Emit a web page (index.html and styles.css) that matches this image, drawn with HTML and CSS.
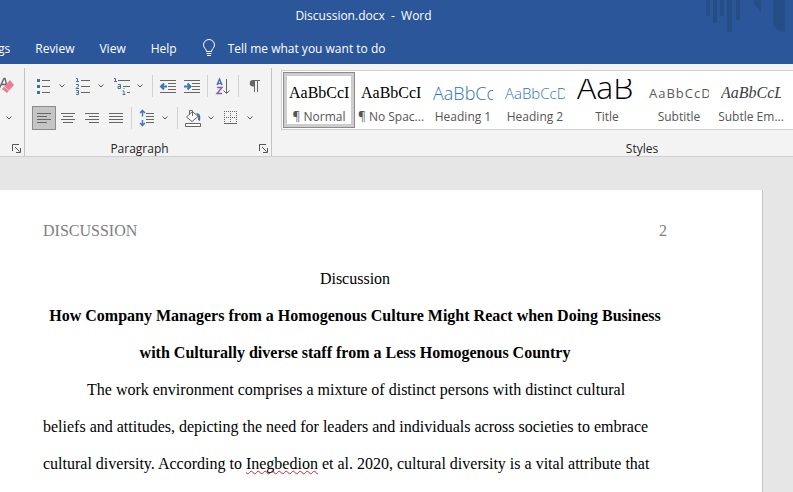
FILE: index.html
```html
<!DOCTYPE html>
<html lang="en">
<head>
<meta charset="utf-8">
<title>Discussion.docx - Word</title>
<link rel="stylesheet" href="styles.css">
</head>
<body>
<header class="top">
  <svg class="art" width="92" height="42" viewBox="0 0 92 42" aria-hidden="true">
    <path d="M5 0h4v16H5zM12 0h4v23h-4zM19 0h4v16h-4zM26 0h5v32h-5zM35 0h4v20h-4zM53 0h7v13q-3-6-7-9zM72 0h12v32q-9-1-12-7z"/>
  </svg>
  <h1 class="title">Discussion.docx&nbsp; -&nbsp; Word</h1>
  <nav class="tabs">
    <a href="#mailings">gs</a>
    <a href="#review">Review</a>
    <a href="#view">View</a>
    <a href="#help">Help</a>
    <button class="tell" type="button">
      <svg width="14" height="18" viewBox="0 0 14 18"><path d="M4.500 12.500C4.500 10 1.500 9 1.500 6a5.500 5.500 0 0 1 11 0c0 3-3 4-3 6.500zM4.500 14.500h5M5 16.500h4"/></svg>
      <span>Tell me what you want to do</span>
    </button>
  </nav>
</header>

<section class="ribbon">
  <div class="group font-group">
    <div class="row">
      <button class="tool" type="button" aria-label="Clear formatting"><svg width="24" height="24" viewBox="0 0 24 24"><path class="ink thick" d="M8.500 14 13 4.500h1l1.500 6M10.500 10.500h5"/><path class="pink" d="m19 6 4 5-7 8-5-4z"/><path class="pale" d="m13 12.500 5 4"/></svg></button>
    </div>
    <div class="row">
      <button class="drop" type="button" aria-label="Font color options"><svg width="8" height="6" viewBox="0 0 8 6"><path d="m1.500 1.500 2.500 2.500 2.500-2.500"/></svg></button>
    </div>
    <div class="foot"><button class="launch" type="button" aria-label="Font settings"><svg width="9" height="9" viewBox="0 0 9 9"><path d="M.5 7V.5H7M3 3l4.500 4.500M8.500 4v4.500H4"/></svg></button></div>
  </div>

  <div class="group para-group">
    <div class="row">
      <button class="tool" type="button" aria-label="Bullets"><svg width="24" height="24" viewBox="0 0 24 24"><path class="ink" d="M10 6.500h8M10 12.500h8M10 18.500h8"/><path class="bluefill" d="M5 5h3v3H5zM5 11h3v3H5zM5 17h3v3H5z"/></svg></button>
      <button class="drop" type="button" aria-label="Bullet options"><svg width="8" height="6" viewBox="0 0 8 6"><path d="m1.500 1.500 2.500 2.500 2.500-2.500"/></svg></button>
      <button class="tool" type="button" aria-label="Numbering"><svg width="24" height="24" viewBox="0 0 24 24"><path class="ink" d="M10 6.500h9M10 12.500h9M10 18.500h9"/><path class="blue" d="M5 4.500h1.500v3M5 7.500h3M5 10.500h2.500v1.500L5 14.500h3M5 16.500h2.500v4H5M5.500 18.500h2"/></svg></button>
      <button class="drop" type="button" aria-label="Numbering options"><svg width="8" height="6" viewBox="0 0 8 6"><path d="m1.500 1.500 2.500 2.500 2.500-2.500"/></svg></button>
      <button class="tool" type="button" aria-label="Multilevel list"><svg width="24" height="24" viewBox="0 0 24 24"><path class="ink" d="M8 6.500h12M13 12.500h7M17 18.500h3"/><path class="blue" d="M4 4.500h1.500v3M4 7.500h3M8 10.500h2.500v4H8v-2h2.500M12.500 17h1.500v4M12.500 20.500h3M13.500 14.500h1"/></svg></button>
      <button class="drop" type="button" aria-label="Multilevel options"><svg width="8" height="6" viewBox="0 0 8 6"><path d="m1.500 1.500 2.500 2.500 2.500-2.500"/></svg></button>
      <span class="sep"></span>
      <button class="tool" type="button" aria-label="Decrease indent"><svg width="24" height="24" viewBox="0 0 24 24"><path class="ink" d="M4 6.500h16M12 9.500h8M12 12.500h8M12 15.500h8M4 18.500h16"/><path class="bold" d="M11 12.500H5M8 9.500l-3 3 3 3"/></svg></button>
      <button class="tool" type="button" aria-label="Increase indent"><svg width="24" height="24" viewBox="0 0 24 24"><path class="ink" d="M4 6.500h16M12 9.500h8M12 12.500h8M12 15.500h8M4 18.500h16"/><path class="bold" d="M4 12.500h6M7.500 9.500l3 3-3 3"/></svg></button>
      <span class="sep"></span>
      <button class="tool" type="button" aria-label="Sort"><svg width="24" height="24" viewBox="0 0 24 24"><path class="blue thick" d="M6 11 8.500 5 11 11M7 9.500h3"/><path class="violet" d="M6 13.500h5L6 19.500h5"/><path class="ink" d="M15.500 5v14.500M12.500 16.500l3 3 3-3"/></svg></button>
      <span class="sep"></span>
      <button class="tool" type="button" aria-label="Show paragraph marks"><svg width="24" height="24" viewBox="0 0 24 24"><path class="ink" d="M11 6.500h7M12.500 6.500V18M15.500 6.500V18"/><path class="inkfill" d="M13 6h-2a3 3 0 0 0 0 6.500h2z"/></svg></button>
    </div>
    <div class="row">
      <button class="tool on" type="button" aria-label="Align left"><svg width="24" height="24" viewBox="0 0 24 24"><path class="ink" d="M5 7.500h14M5 10.500h10M5 13.500h14M5 16.500h10"/></svg></button>
      <button class="tool" type="button" aria-label="Center"><svg width="24" height="24" viewBox="0 0 24 24"><path class="ink" d="M5 7.500h14M7 10.500h10M5 13.500h14M7 16.500h10"/></svg></button>
      <button class="tool" type="button" aria-label="Align right"><svg width="24" height="24" viewBox="0 0 24 24"><path class="ink" d="M5 7.500h14M9 10.500h10M5 13.500h14M9 16.500h10"/></svg></button>
      <button class="tool" type="button" aria-label="Justify"><svg width="24" height="24" viewBox="0 0 24 24"><path class="ink" d="M5 7.500h14M5 10.500h14M5 13.500h14M5 16.500h14"/></svg></button>
      <span class="sep"></span>
      <button class="tool" type="button" aria-label="Line spacing"><svg width="24" height="24" viewBox="0 0 24 24"><path class="ink" d="M11 7.500h8M11 10.500h8M11 13.500h8M11 16.500h8"/><path class="blue thick" d="M7.500 5v5.500M5 7l2.500-2.500L10 7M7.500 14v5.500M5 17l2.500 2.500L10 17"/></svg></button>
      <button class="drop" type="button" aria-label="Line spacing options"><svg width="8" height="6" viewBox="0 0 8 6"><path d="m1.500 1.500 2.500 2.500 2.500-2.500"/></svg></button>
      <span class="sep"></span>
      <button class="tool" type="button" aria-label="Shading"><svg width="24" height="24" viewBox="0 0 24 24"><path class="ink white" d="m11.500 5.500 5.500 5-6 5-5.500-4.500z"/><path class="ink" d="M8.500 9V4.500h3V10"/><path class="bluefill" d="M15 7c4 0 5 3 4 8l-2-1c0-2 1-3-2-7z"/><path class="ink white" d="M4.500 17.500h15v3h-15z"/></svg></button>
      <button class="drop" type="button" aria-label="Shading options"><svg width="8" height="6" viewBox="0 0 8 6"><path d="m1.500 1.500 2.500 2.500 2.500-2.500"/></svg></button>
      <button class="tool" type="button" aria-label="Borders"><svg width="24" height="24" viewBox="0 0 24 24"><path class="ink dots" d="M4 5.500h13M4 11.500h13M4.500 5v12M10.500 5v12M16.500 5v12"/><path class="ink" d="M4 17.500h13"/></svg></button>
      <button class="drop" type="button" aria-label="Border options"><svg width="8" height="6" viewBox="0 0 8 6"><path d="m1.500 1.500 2.500 2.500 2.500-2.500"/></svg></button>
    </div>
    <div class="foot"><span class="name">Paragraph</span><button class="launch" type="button" aria-label="Paragraph settings"><svg width="9" height="9" viewBox="0 0 9 9"><path d="M.5 7V.5H7M3 3l4.500 4.500M8.500 4v4.500H4"/></svg></button></div>
  </div>

  <div class="group style-group">
    <div class="gallery">
      <button class="style current" type="button"><span class="demo serif">AaBbCcI</span><span class="label">¶ Normal</span></button>
      <button class="style" type="button"><span class="demo serif">AaBbCcI</span><span class="label">¶ No Spac...</span></button>
      <button class="style" type="button"><span class="demo head1">AaBbCc</span><span class="label">Heading 1</span></button>
      <button class="style" type="button"><span class="demo head2">AaBbCcD</span><span class="label">Heading 2</span></button>
      <button class="style" type="button"><span class="demo big">AaB</span><span class="label">Title</span></button>
      <button class="style" type="button"><span class="demo sub">AaBbCcD</span><span class="label">Subtitle</span></button>
      <button class="style" type="button"><span class="demo serif subtle">AaBbCcL</span><span class="label">Subtle Em...</span></button>
    </div>
    <div class="foot"><span class="name">Styles</span></div>
  </div>
</section>

<main class="desk">
  <article class="page">
    <div class="running"><span>DISCUSSION</span><span>2</span></div>
    <p class="center">Discussion</p>
    <h2>How Company Managers from a Homogenous Culture Might React when Doing Business<br>with Culturally diverse staff from a Less Homogenous Country</h2>
    <p class="body">The work environment comprises a mixture of distinct persons with distinct cultural<br>beliefs and attitudes, depicting the need for leaders and individuals across societies to embrace<br>cultural diversity. According to <span class="typo">Inegbedion</span> et al. 2020, cultural diversity is a vital attribute that</p>
  </article>
</main>
</body>
</html>
```
FILE: styles.css
```css
* { box-sizing: border-box; }
html, body { height: 100%; }
body {
  margin: 0;
  display: flex;
  flex-direction: column;
  overflow: hidden;
  background: #e6e6e6;
  font-family: "Open Sans", "Noto Sans", sans-serif;
  font-size: 12px;
}
button {
  margin: 0;
  padding: 0;
  border: 0;
  background: none;
  font: inherit;
  color: inherit;
}
svg { display: block; fill: none; }

.top {
  position: relative;
  flex: none;
  background: #2b579a;
  color: #fff;
}
.art { position: absolute; top: 0; right: 0; fill: #254d86; }
.title {
  margin: 0;
  padding-right: 66px;
  font-size: 12px;
  font-weight: 400;
  line-height: 32px;
  text-align: center;
}
.tabs { display: flex; align-items: center; gap: 25px; height: 32px; margin-left: -2px; }
.tabs a { color: #fff; text-decoration: none; }
.tell { display: flex; align-items: center; gap: 12px; }
.tell svg { stroke: #fff; }

.ribbon {
  flex: none;
  display: flex;
  background: #f3f3f3;
  border-bottom: 1px solid #cfcfcf;
  padding-top: 4px;
}
.group { display: flex; flex-direction: column; }
.font-group { width: 25px; border-right: 1px solid #c4c4c4; }
.font-group .row { justify-content: flex-end; padding-right: 9px; }
.para-group { width: 247px; padding-left: 7px; border-right: 1px solid #c4c4c4; }
.style-group { flex: 1; min-width: 0; padding-left: 9px; }
.row { display: flex; align-items: center; height: 24px; margin-top: 6px; }
.row + .row { margin-top: 8px; }
.tool { flex: none; width: 24px; height: 24px; }
.on { background: #c5c5c5; outline: 1px solid #8c8c8c; outline-offset: -1px; }
.drop { display: flex; justify-content: center; width: 12px; margin-right: 3px; }
.drop svg { stroke: #555; }
.font-group .drop { margin: 0; }
.sep { width: 1px; height: 22px; margin: 0 3px; background: #d2d2d2; }
.foot { display: flex; align-items: center; height: 16px; margin-top: 10px; color: #262626; }
.para-group .foot { margin-right: 3px; }
.font-group .foot { justify-content: flex-end; padding-right: 3px; }
.name { flex: 1; text-align: center; }
.para-group .name { padding-right: 12px; }
.launch svg { stroke: #555; }

.ink { stroke: #666; }
.white { fill: #fff; }
.dots { stroke-dasharray: 1 1; }
.inkfill { fill: #666; }
.blue { stroke: #4472a8; }
.bluefill { fill: #41719c; }
.thick { stroke-width: 1.4; }
.bold { stroke: #3c76b4; stroke-width: 2; }
.violet { stroke: #8b5aa8; stroke-width: 1.4; }
.pink { fill: #ea7e92; }
.pale { stroke: #f8ccd4; stroke-width: 1; }

.gallery {
  display: flex;
  height: 60px;
  margin-top: 2px;
  padding: 1px;
  background: #fff;
  border: 1px solid #d0d0d0;
  border-right: 0;
  overflow: hidden;
}
.style {
  flex: none;
  display: flex;
  flex-direction: column;
  align-items: center;
  width: 72px;
  padding-top: 7px;
}
.current { outline: 1px solid #8c8c8c; outline-offset: -1px; box-shadow: inset 0 0 0 4px #cdcdcd; }
.demo {
  width: 60px;
  height: 28px;
  line-height: 28px;
  overflow: hidden;
  white-space: nowrap;
  text-align: left;
  color: #000;
}
.label { line-height: 20px; white-space: nowrap; color: #555; }
.serif { font-family: "Liberation Serif", serif; font-size: 16px; }
.head1 { font-size: 18px; font-weight: 300; color: #2e74b5; }
.head2 { font-size: 15px; font-weight: 300; color: #2e74b5; }
.big { font-size: 32px; font-weight: 300; line-height: 16px; }
.sub { font-size: 13px; letter-spacing: 1px; color: #5a5a5a; }
.subtle { font-style: italic; color: #404040; }
.style-group .foot { padding-left: 210px; }

.desk { flex: 1; min-height: 0; padding: 33px 30px 0 0; }
.page {
  height: 100%;
  padding: 31px 95px 0 43px;
  background: #fff;
  border-right: 1px solid #c6c6c6;
  color: #000;
  font-family: "Liberation Serif", serif;
  font-size: 16px;
  line-height: 37px;
  white-space: nowrap;
  overflow: hidden;
}
.running {
  display: flex;
  justify-content: space-between;
  margin-bottom: 19px;
  line-height: 20px;
  color: #808080;
}
.page p, .page h2 { margin: 0; font-size: 16px; }
.page .center, .page h2 { text-align: center; }
.body { text-indent: 44px; }
.typo { text-indent: 0; text-decoration: underline wavy #d22 1px; text-decoration-skip-ink: none; }
```
